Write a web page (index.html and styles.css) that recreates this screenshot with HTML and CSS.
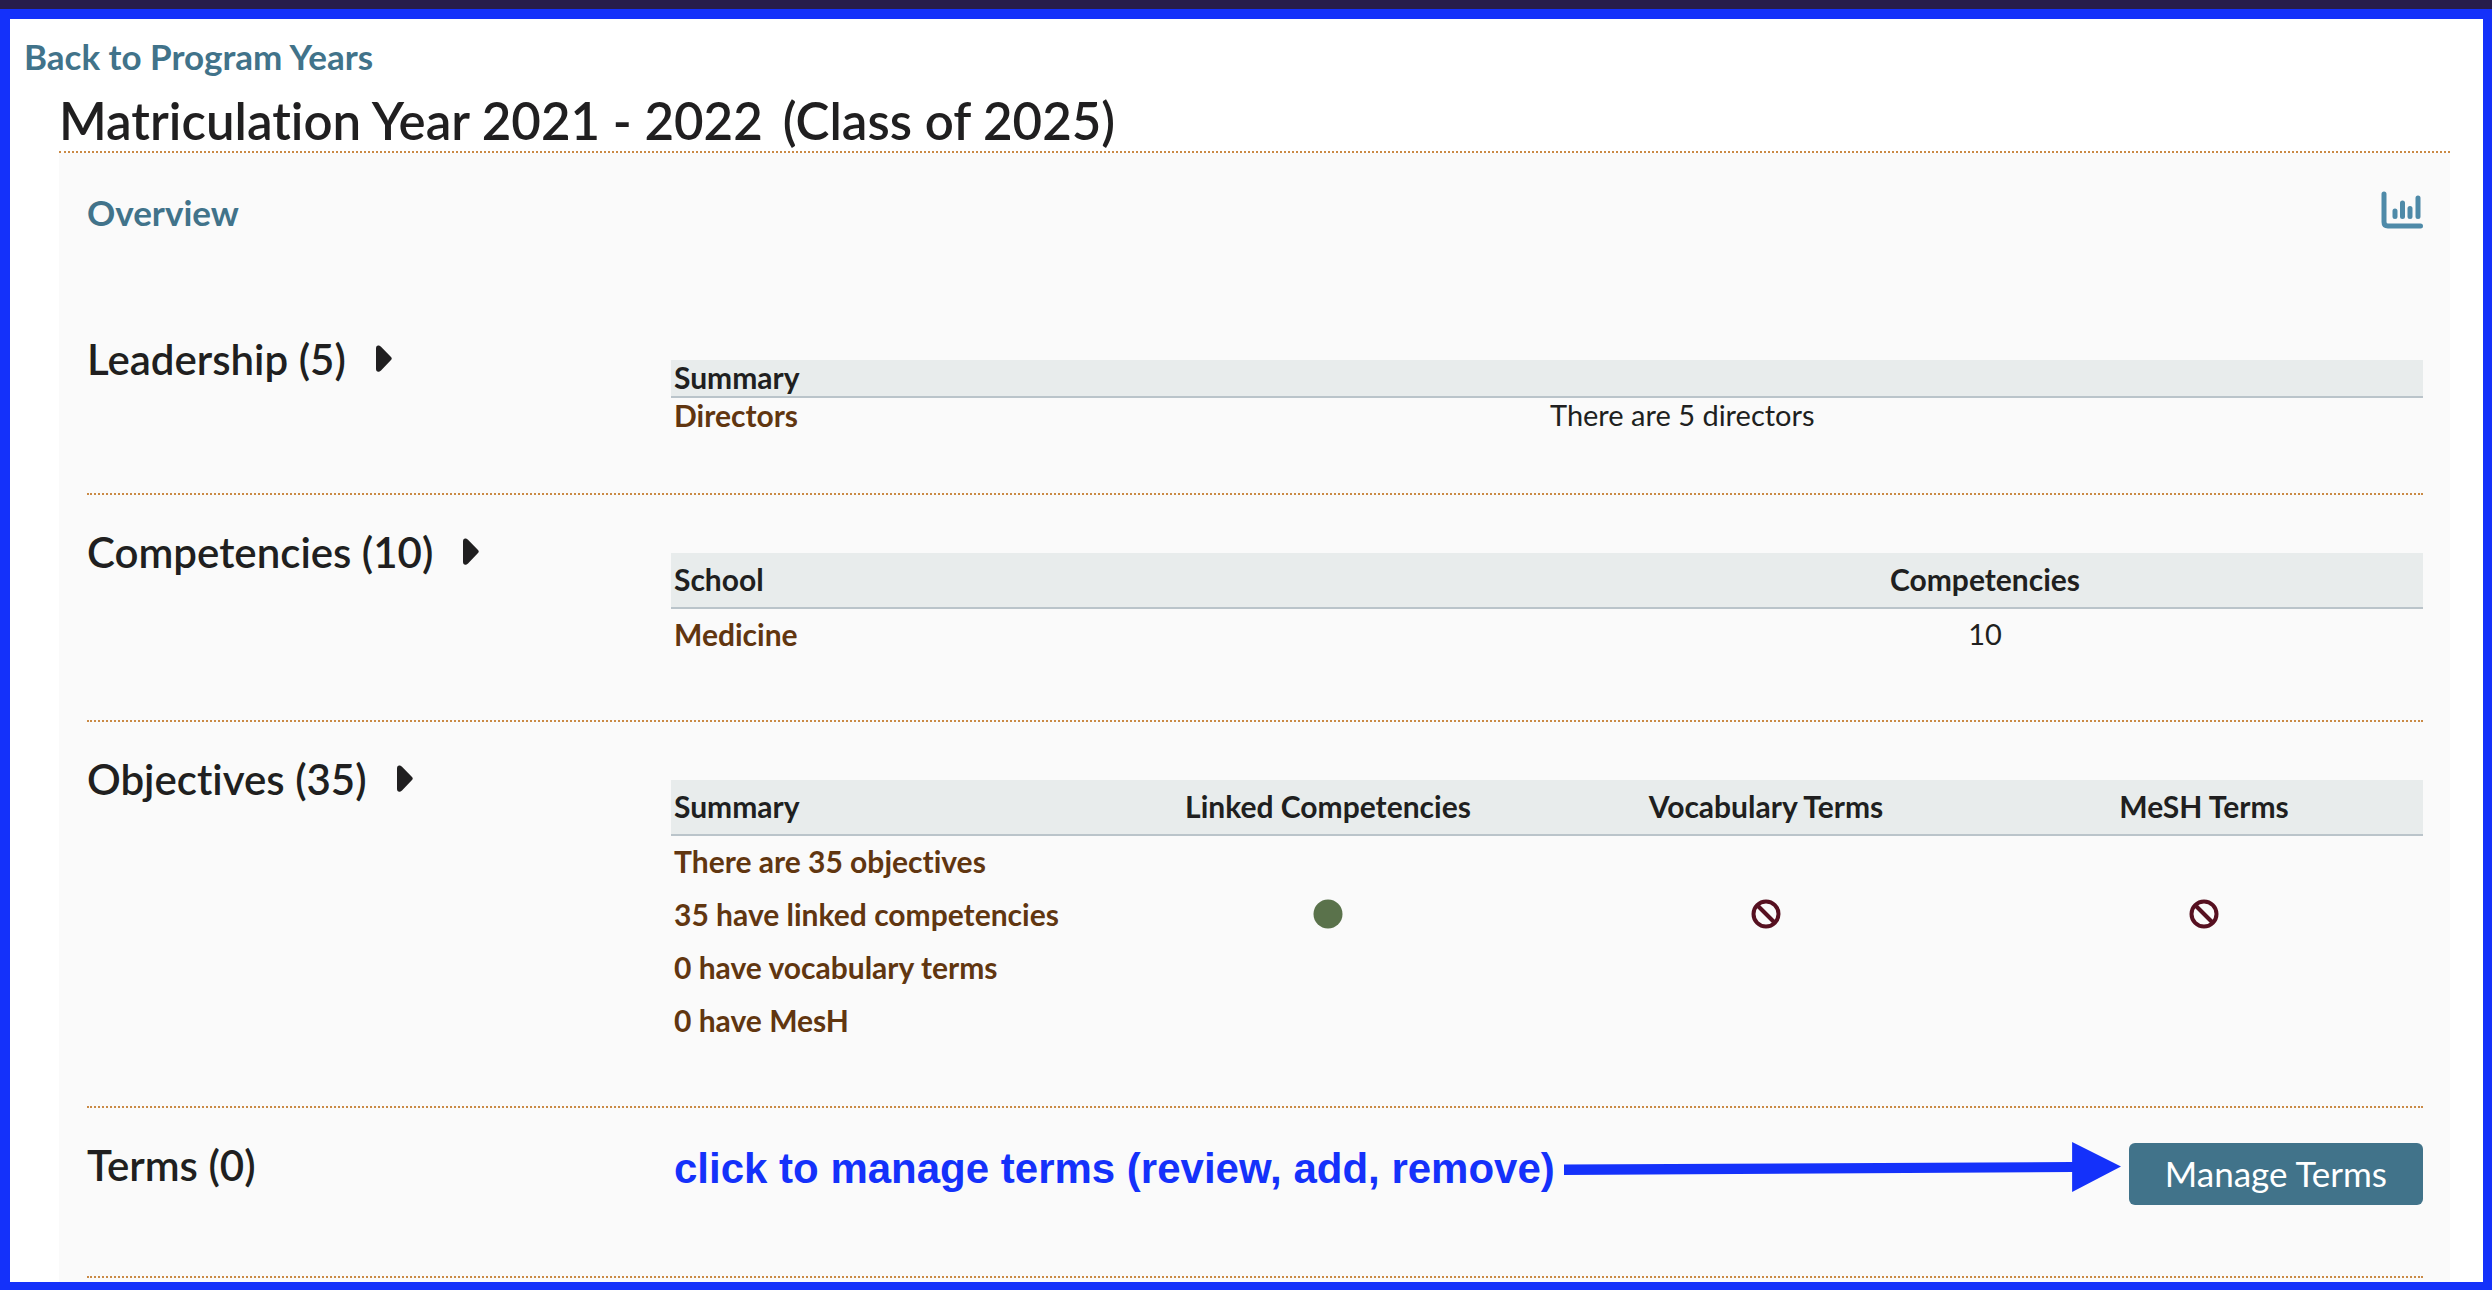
FILE: index.html
```html
<!DOCTYPE html>
<html lang="en">
<head>
<meta charset="utf-8">
<meta name="viewport" content="width=device-width, initial-scale=1">
<title>Matriculation Year 2021 - 2022</title>
<link rel="stylesheet" href="styles.css">
</head>
<body>
<main class="frame">
  <a class="back-link" href="#">Back to Program Years</a>
  <div class="program-year">
    <h1 class="title"><span>Matriculation Year 2021 - 2022</span><span>(Class of 2025)</span></h1>
    <div class="panel">
      <header class="overview">
        <h2 class="overview-title">Overview</h2>
        <a class="chart-link" href="#" aria-label="Program year visualizations">
          <svg viewBox="0 0 42 38" width="42" height="38" fill="none" stroke="currentColor" stroke-width="5" stroke-linecap="round" stroke-linejoin="round">
            <path d="M3 3V31Q3 35 7 35H39.500"/>
            <path d="M14 20V25.500M21.500 12V25.500M29 17.500V25.500M37 7V25.500"/>
          </svg>
        </a>
      </header>

      <section class="section">
        <h3><button class="toggle" type="button">Leadership (5)
          <svg class="caret" viewBox="0 0 16 28" width="16" height="28"><path d="M0 3.500Q0 0 3 .5Q4 .8 5 1.800L15 12Q16.500 13.500 15 15L5 25.500Q4 26.500 3 26.800Q0 27.200 0 23.800Z"/></svg></button></h3>
        <table class="summary compact">
          <thead><tr><th scope="col" colspan="2">Summary</th></tr></thead>
          <tbody><tr><td class="name">Directors</td><td>There are 5 directors</td></tr></tbody>
        </table>
      </section>

      <section class="section">
        <h3><button class="toggle" type="button">Competencies (10)
          <svg class="caret" viewBox="0 0 16 28" width="16" height="28"><path d="M0 3.500Q0 0 3 .5Q4 .8 5 1.800L15 12Q16.500 13.500 15 15L5 25.500Q4 26.500 3 26.800Q0 27.200 0 23.800Z"/></svg></button></h3>
        <table class="summary">
          <thead><tr><th scope="col">School</th><th scope="col" class="center">Competencies</th></tr></thead>
          <tbody><tr><td class="name">Medicine</td><td class="center">10</td></tr></tbody>
        </table>
      </section>

      <section class="section">
        <h3><button class="toggle" type="button">Objectives (35)
          <svg class="caret" viewBox="0 0 16 28" width="16" height="28"><path d="M0 3.500Q0 0 3 .5Q4 .8 5 1.800L15 12Q16.500 13.500 15 15L5 25.500Q4 26.500 3 26.800Q0 27.200 0 23.800Z"/></svg></button></h3>
        <table class="summary">
          <thead><tr><th scope="col">Summary</th><th scope="col" class="center">Linked Competencies</th><th scope="col" class="center">Vocabulary Terms</th><th scope="col" class="center">MeSH Terms</th></tr></thead>
          <tbody>
            <tr><td class="name">There are 35 objectives</td><td></td><td></td><td></td></tr>
            <tr>
              <td class="name">35 have linked competencies</td>
              <td class="center"><svg class="yes" viewBox="0 0 30 30" width="30" height="30" role="img" aria-label="Yes"><circle cx="15" cy="15" r="14.500" fill="currentColor"/></svg></td>
              <td class="center"><svg class="no" viewBox="0 0 30 30" width="30" height="30" role="img" aria-label="No" fill="none" stroke="currentColor" stroke-width="4"><circle cx="15" cy="15" r="12.500"/><path d="M6 6L24 24"/></svg></td>
              <td class="center"><svg class="no" viewBox="0 0 30 30" width="30" height="30" role="img" aria-label="No" fill="none" stroke="currentColor" stroke-width="4"><circle cx="15" cy="15" r="12.500"/><path d="M6 6L24 24"/></svg></td>
            </tr>
            <tr><td class="name">0 have vocabulary terms</td><td></td><td></td><td></td></tr>
            <tr><td class="name">0 have MesH</td><td></td><td></td><td></td></tr>
          </tbody>
        </table>
      </section>

      <section class="section">
        <h3>Terms (0)</h3>
        <div class="terms">
          <p class="hint">click to manage terms (review, add, remove)</p>
          <svg class="arrow" viewBox="0 0 558 50" preserveAspectRatio="none" aria-hidden="true"><path d="M0 22.500L509 20V0L558 24.500L509 50V30L0 33Z"/></svg>
          <button class="manage" type="button">Manage Terms</button>
        </div>
      </section>
    </div>
  </div>
</main>
</body>
</html>
```
FILE: styles.css
```css
* {
  box-sizing: border-box;
}

body {
  margin: 0;
  padding: 9px 0 1px;
  background: #271d4b;
  color: #201f20;
  font-family: Lato, "Open Sans", sans-serif;
  font-size: 30px;
  font-variant-ligatures: none;
}

h1, h2, h3, p {
  margin: 0;
}

.frame {
  border: 10px solid #1431fa;
  border-right-width: 9px;
  background: #fff;
  padding-top: 16px;
}

.back-link {
  display: block;
  width: fit-content;
  margin-left: 14px;
  color: #41738a;
  font-size: 35px;
  font-weight: 700;
  line-height: 42px;
  text-decoration: none;
}

.program-year {
  margin: 14px 33px 0 49px;
}

.title {
  display: flex;
  flex-wrap: wrap;
  column-gap: 20px;
  border-bottom: 2px dotted #ca8a45;
  font-size: 51px;
  font-weight: 600;
  line-height: 60px;
}

.panel {
  padding: 38px 27px 4px 28px;
  background: #fafafa;
}

.overview {
  display: flex;
  justify-content: space-between;
  margin-bottom: 69px;
}

.overview-title {
  color: #41738a;
  font-size: 35px;
  font-weight: 700;
  line-height: 42px;
}

.chart-link {
  color: #4e8aa8;
  line-height: 0;
}

.section {
  display: grid;
  grid-template-columns: minmax(0, 1fr) minmax(0, 3fr);
  align-items: start;
  padding: 32px 0 59px;
  border-bottom: 2px dotted #ca8a45;
}

.section h3 {
  font-size: 42px;
  font-weight: 600;
  line-height: 50px;
}

.toggle {
  display: flex;
  align-items: center;
  gap: 30px;
  padding: 0;
  border: 0;
  background: none;
  color: inherit;
  font: inherit;
  cursor: pointer;
}

.caret {
  fill: currentColor;
}

.summary {
  width: 100%;
  margin-top: 26px;
  border-collapse: collapse;
  table-layout: fixed;
}

.summary th,
.summary td {
  height: 53px;
  padding: 0 3px 2px;
  font-size: 29px;
  line-height: 34px;
  text-align: left;
}

.summary thead tr {
  border-bottom: 2px solid #bac4ca;
  background: #e8ecec;
}

.summary th,
.summary .name {
  font-size: 30px;
  font-weight: 700;
}

.summary th {
  height: 55px;
}

.summary .name {
  color: #613610;
}

.summary .center {
  text-align: center;
}

.summary.compact th,
.summary.compact td {
  height: 37px;
}

.summary svg {
  display: block;
  margin: 0 auto;
}

.yes {
  color: #5a724b;
}

.no {
  color: #561020;
}

.terms {
  display: flex;
  align-items: center;
  min-height: 75px;
  padding: 2px 0 11px 3px;
}

.hint {
  margin-bottom: 10px;
  color: #1431fa;
  font: 700 42px/48px "Liberation Sans", sans-serif;
}

.arrow {
  flex: 1;
  min-width: 0;
  height: 50px;
  margin: 0 8px 14px 9px;
  fill: #1431fa;
}

.manage {
  flex: none;
  height: 62px;
  padding: 0 36px 2px;
  border: 0;
  border-radius: 6px;
  background: #41738a;
  color: #fff;
  font: 400 35px/42px Lato, "Open Sans", sans-serif;
  cursor: pointer;
}
```
